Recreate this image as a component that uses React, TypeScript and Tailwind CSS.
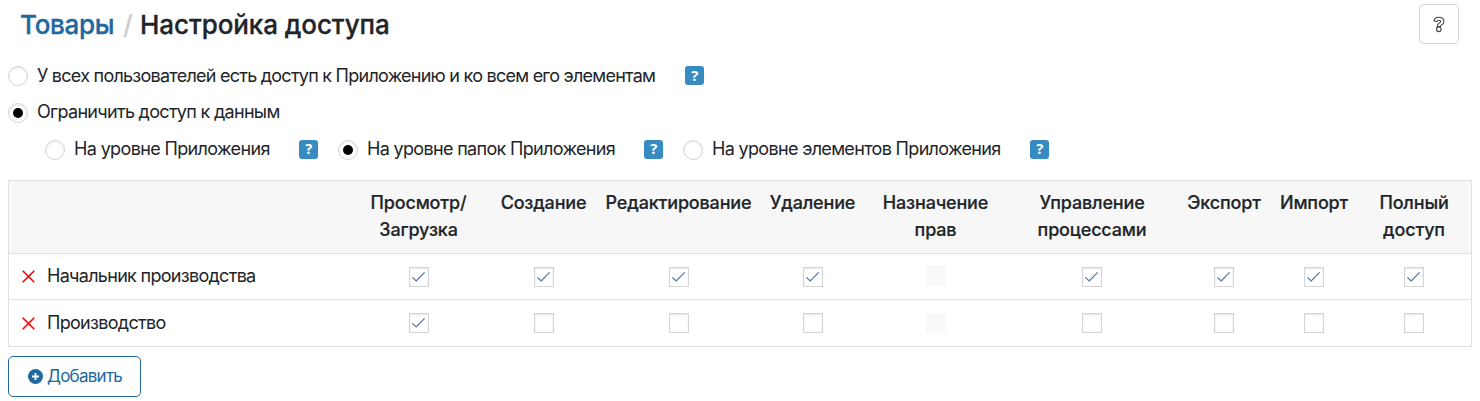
import React from "react";

const columns: string[][] = [
  ["Просмотр/", "Загрузка"],
  ["Создание"],
  ["Редактирование"],
  ["Удаление"],
  ["Назначение", "прав"],
  ["Управление", "процессами"],
  ["Экспорт"],
  ["Импорт"],
  ["Полный", "доступ"],
];

type CellState = "on" | "off" | "disabled";

const rows: { name: string; cells: CellState[] }[] = [
  {
    name: "Начальник производства",
    cells: ["on", "on", "on", "on", "disabled", "on", "on", "on", "on"],
  },
  {
    name: "Производство",
    cells: ["on", "off", "off", "off", "disabled", "off", "off", "off", "off"],
  },
];

const gridCols =
  "grid grid-cols-[344px_131px_119px_151px_117px_129px_184px_80px_100px_100px]";

function Radio({ checked = false }: { checked?: boolean }) {
  return (
    <span className="flex h-5 w-5 shrink-0 items-center justify-center rounded-full border border-[#d5d5d5] bg-white shadow-[inset_0_1px_2px_rgba(0,0,0,0.1)]">
      {checked && <span className="h-2.5 w-2.5 rounded-full bg-black" />}
    </span>
  );
}

function Hint() {
  return (
    <span className="mb-px flex h-[19px] w-[19px] shrink-0 items-center justify-center rounded-[3px] bg-[#388bc1] pb-px font-['Open_Sans',sans-serif] text-[15px] leading-none font-bold text-white">
      ?
    </span>
  );
}

function Checkbox({ state }: { state: CellState }) {
  if (state === "disabled") {
    return <span className="mb-px h-5 w-5 bg-[#f9f9f9] shadow-[inset_0_1px_1px_rgba(0,0,0,0.02)]" />;
  }
  return (
    <span className="flex h-5 w-5 items-center justify-center border border-[#d5d5d5] bg-white shadow-[inset_0_1px_2px_rgba(0,0,0,0.1)]">
      {state === "on" && (
        <svg width="18" height="18" viewBox="0 0 18 18" fill="none">
          <path d="M2.4 9.3 6.2 13 14.6 4.4" stroke="#4a6fa8" strokeWidth="1.15" />
        </svg>
      )}
    </span>
  );
}

export default function App() {
  return (
    <div className="h-[401px] w-[1480px] overflow-hidden bg-white px-2 font-['Inter',sans-serif] text-[18px] leading-[27px] tracking-[-0.67px] whitespace-nowrap text-[#212529]">
      <header className="flex h-[58px] items-start justify-between pr-[13px] pl-3">
        <h1 className="flex pt-[7px] text-[26px] leading-9 font-medium tracking-[-0.08px] [-webkit-text-stroke:0.3px]">
          <span className="w-[94px] tracking-[-0.3px] text-[#20689e]">Товары</span>
          <span className="w-[26px] pl-[9px] text-[#cfcfcf]">/</span>
          <span>Настройка доступа</span>
        </h1>
        <button className="mt-1 flex h-10 w-10 items-center justify-center rounded-[5px] border border-[#d5d5d5]">
          <svg width="14" height="18" viewBox="0 0 14 18" fill="none" stroke="#444" strokeWidth="1.1">
            <path d="M2 5.8C2.3 3.5 4.1 2.3 6.8 2.3c3.1 0 5.1 1.6 5.1 4.1 0 2.1-1.2 3.1-2.7 3.9-.8.4-.8.8-.9 1.5H5.2c0-2 .4-2.8 2-3.7 1-.6 1.5-.9 1.5-1.6 0-.8-.7-1.2-1.8-1.2-1 0-1.5.4-2 1.4z" />
            <circle cx="6.8" cy="14.3" r="2.3" />
          </svg>
        </button>
      </header>

      <div className="flex h-9 items-center">
        <Radio />
        <span className="mb-0.5 ml-[9px] w-[648px] tracking-[-0.75px]">
          У всех пользователей есть доступ к Приложению и ко всем его элементам
        </span>
        <Hint />
      </div>
      <div className="flex h-[37px] items-center">
        <Radio checked />
        <span className="mb-0.5 ml-[9px] tracking-[-0.7px]">Ограничить доступ к данным</span>
      </div>
      <div className="flex h-[37px] items-center pl-[37px]">
        <Radio />
        <span className="mb-0.5 ml-[9px] w-[225px] tracking-[-0.64px]">На уровне Приложения</span>
        <Hint />
        <span className="ml-5 flex items-center">
          <Radio checked />
        </span>
        <span className="mb-0.5 ml-[9px] w-[277px]">На уровне папок Приложения</span>
        <Hint />
        <span className="ml-5 flex items-center">
          <Radio />
        </span>
        <span className="mb-0.5 ml-[9px] w-[318px]">На уровне элементов Приложения</span>
        <Hint />
      </div>

      <div className="mt-3 h-[167px] w-[1464px] border border-[#dee2e6]">
        <div className={`${gridCols} h-[73px] border-b border-[#dee2e6] bg-[#f7f7f7] pt-2 font-medium tracking-[-0.17px] [-webkit-text-stroke:0.2px]`}>
          <span />
          {columns.map((lines) => (
            <div key={lines[0]} className="flex flex-col items-center">
              {lines.map((line) => (
                <span key={line}>{line}</span>
              ))}
            </div>
          ))}
        </div>
        {rows.map((row) => (
          <div key={row.name} className={`${gridCols} h-[46px] items-center not-last:border-b not-last:border-[#dee2e6]`}>
            <div className="flex items-center pl-[13px]">
              <svg width="13" height="13" viewBox="0 0 13 13" stroke="#ff0000" strokeWidth="1.6">
                <path d="M.7 .7l11.6 11.6M12.3 .7 .7 12.3" />
              </svg>
              <span className="mb-0.5 ml-3 tracking-[-0.7px]">{row.name}</span>
            </div>
            {row.cells.map((state, i) => (
              <div key={i} className="flex justify-center">
                <Checkbox state={state} />
              </div>
            ))}
          </div>
        ))}
      </div>

      <button className="mt-[9px] flex h-[41px] w-[133px] items-center rounded-[5px] border border-[#20689e] pl-[19px] text-[17px] tracking-[-0.75px] text-[#20689e]">
        <svg width="15" height="15" viewBox="0 0 15 15">
          <circle cx="7.5" cy="7.5" r="7.5" fill="#20689e" />
          <path d="M7.5 4v7M4 7.5h7" stroke="#fff" strokeWidth="1.8" />
        </svg>
        <span className="ml-1">Добавить</span>
      </button>
    </div>
  );
}
